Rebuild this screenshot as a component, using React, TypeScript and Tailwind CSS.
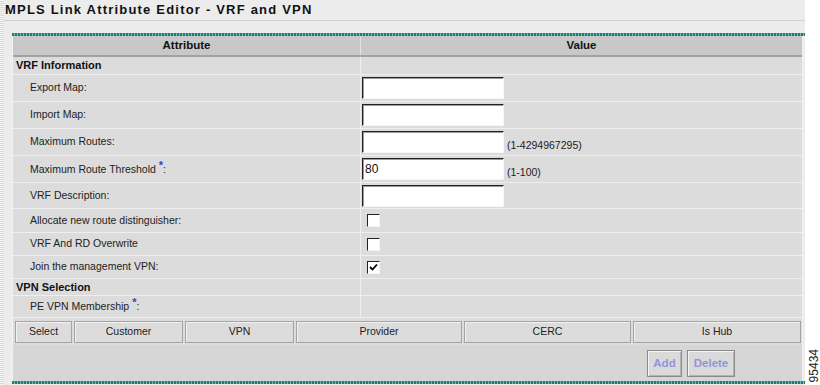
import React from "react";

type Row =
  | { kind: "section"; label: string; h: string }
  | { kind: "input"; label: string; h: string; value?: string; hint?: string; required?: boolean }
  | { kind: "check"; label: string; h: string; checked?: boolean }
  | { kind: "plain"; label: string; h: string; required?: boolean };

const rows: Row[] = [
  { kind: "section", label: "VRF Information", h: "h-[18px]" },
  { kind: "input", label: "Export Map:", h: "h-[27px]" },
  { kind: "input", label: "Import Map:", h: "h-[27px]" },
  { kind: "input", label: "Maximum Routes:", h: "h-[27px]", hint: "(1-4294967295)" },
  { kind: "input", label: "Maximum Route Threshold", h: "h-[27px]", value: "80", hint: "(1-100)", required: true },
  { kind: "input", label: "VRF Description:", h: "h-[26px]" },
  { kind: "check", label: "Allocate new route distinguisher:", h: "h-[24px]" },
  { kind: "check", label: "VRF And RD Overwrite", h: "h-[23px]" },
  { kind: "check", label: "Join the management VPN:", h: "h-[23px]", checked: true },
  { kind: "section", label: "VPN Selection", h: "h-[17px]" },
  { kind: "plain", label: "PE VPN Membership", h: "h-[22px]", required: true },
];

const columns = [
  { name: "Select", w: "w-[57px]" },
  { name: "Customer", w: "w-[109px]" },
  { name: "VPN", w: "w-[109px]" },
  { name: "Provider", w: "w-[166px]" },
  { name: "CERC", w: "w-[167px]" },
  { name: "Is Hub", w: "w-[168px]" },
];

function Star() {
  return (
    <>
      {" "}
      <span className="relative top-[-4px] text-[11px] font-bold text-[#3a3acc]">*</span>
      <span>:</span>
    </>
  );
}

function TextBox({ value }: { value?: string }) {
  return (
    <div className="flex h-[22px] w-[142px] items-center border-t border-l border-t-[#222] border-l-[#222] border-b border-r border-b-[#f6f6f6] border-r-[#f6f6f6] bg-white pl-[2px] text-[12px] text-[#111] shadow-[inset_1px_1px_0_#9a9a9a]">
      {value}
    </div>
  );
}

function CheckBox({ checked }: { checked?: boolean }) {
  return (
    <div className="ml-[5px] flex h-[13px] w-[13px] items-center justify-center border-t border-l border-t-[#222] border-l-[#222] border-b border-r border-b-[#f4f4f4] border-r-[#f4f4f4] bg-white">
      {checked && (
        <svg width="9" height="9" viewBox="0 0 9 9" aria-hidden="true">
          <path d="M1 4 L3.5 6.5 L8 1.5" fill="none" stroke="#000" strokeWidth="1.8" />
        </svg>
      )}
    </div>
  );
}

function TableRow({ row }: { row: Row }) {
  const isSection = row.kind === "section";
  return (
    <div className={`flex ${row.h} border-b border-[#efefef] bg-[#dcdcdc]`}>
      <div
        className={`flex w-[348px] items-center border-r border-[#efefef] ${
          isSection ? "pl-[3px] text-[11px] font-bold text-[#111]" : "pl-[17px] text-[10.5px] text-[#222]"
        }`}
      >
        <span>
          {row.label}
          {"required" in row && row.required && <Star />}
        </span>
      </div>
      <div className="flex flex-1 items-center pl-[1px]">
        {row.kind === "input" && (
          <>
            <TextBox value={row.value} />
            {row.hint && <span className="ml-[3px] mt-[7px] text-[10.5px] text-[#222]">{row.hint}</span>}
          </>
        )}
        {row.kind === "check" && <CheckBox checked={row.checked} />}
      </div>
    </div>
  );
}

function Teal() {
  return (
    <div className="h-[3px] bg-[repeating-linear-gradient(90deg,#1e7d74_0_2px,#6ec0b6_2px_3px)]" />
  );
}

function Button({ label, w }: { label: string; w: string }) {
  return (
    <div
      className={`flex h-[27px] ${w} items-center justify-center border border-[#8a8a8a] bg-[#dadada] text-[11.5px] font-bold text-[#9494d4] shadow-[inset_1px_1px_0_#f4f4f4,inset_-1px_-1px_0_#b4b4b4]`}
    >
      {label}
    </div>
  );
}

export default function App() {
  return (
    <div className="flex h-[385px] w-[820px] overflow-hidden bg-white font-['Liberation_Sans',Arial,sans-serif]">
      <div className="flex w-[806px] bg-[#ececec]">
        {/* dotted strip on the left edge */}
        <div className="w-[4px] bg-[repeating-linear-gradient(180deg,#f6f6f6_0_1px,#d8d8d8_1px_2px)]" />

        <div className="flex flex-1 flex-col">
          {/* Title */}
          <div className="flex h-[21px] items-center border-b border-[#d2d2d2] pl-[1px] text-[13px] font-bold tracking-[1.2px] text-[#111]">
            MPLS Link Attribute Editor - VRF and VPN
          </div>

          <div className="ml-[8px] mt-[12px] flex w-[793px] flex-col">
            <Teal />
            <div className="mr-[2px] border-x border-[#f2f2f2]">
              {/* Header */}
              <div className="flex h-[21px] border-b-2 border-[#a2a2a2] bg-[#c8c8c8] text-[11.5px] font-bold text-[#111]">
                <div className="flex w-[348px] items-center justify-center border-r border-[#e2e2e2]">Attribute</div>
                <div className="flex flex-1 items-center justify-center">Value</div>
              </div>

              {rows.map((r) => (
                <TableRow key={r.label} row={r} />
              ))}

              {/* VPN membership table */}
              <div className="flex gap-[2px] bg-[#dcdcdc] pb-[2px] pl-[2px] pt-[3px]">
                {columns.map((c) => (
                  <div
                    key={c.name}
                    className={`flex h-[22px] ${c.w} items-center justify-center border border-[#a4a4a4] text-[10.5px] text-[#222] shadow-[inset_1px_1px_0_#f2f2f2]`}
                  >
                    {c.name}
                  </div>
                ))}
              </div>

              {/* Buttons */}
              <div className="flex h-[36px] justify-end gap-[5px] bg-[#d6d6d6] pr-[67px] pt-[5px]">
                <Button label="Add" w="w-[35px]" />
                <Button label="Delete" w="w-[48px]" />
              </div>
            </div>
            <Teal />
          </div>
        </div>
      </div>

      {/* figure number */}
      <div className="flex flex-1 items-end justify-center pb-[3px]">
        <span className="rotate-180 text-[12px] text-[#222] [writing-mode:vertical-rl]">95434</span>
      </div>
    </div>
  );
}
